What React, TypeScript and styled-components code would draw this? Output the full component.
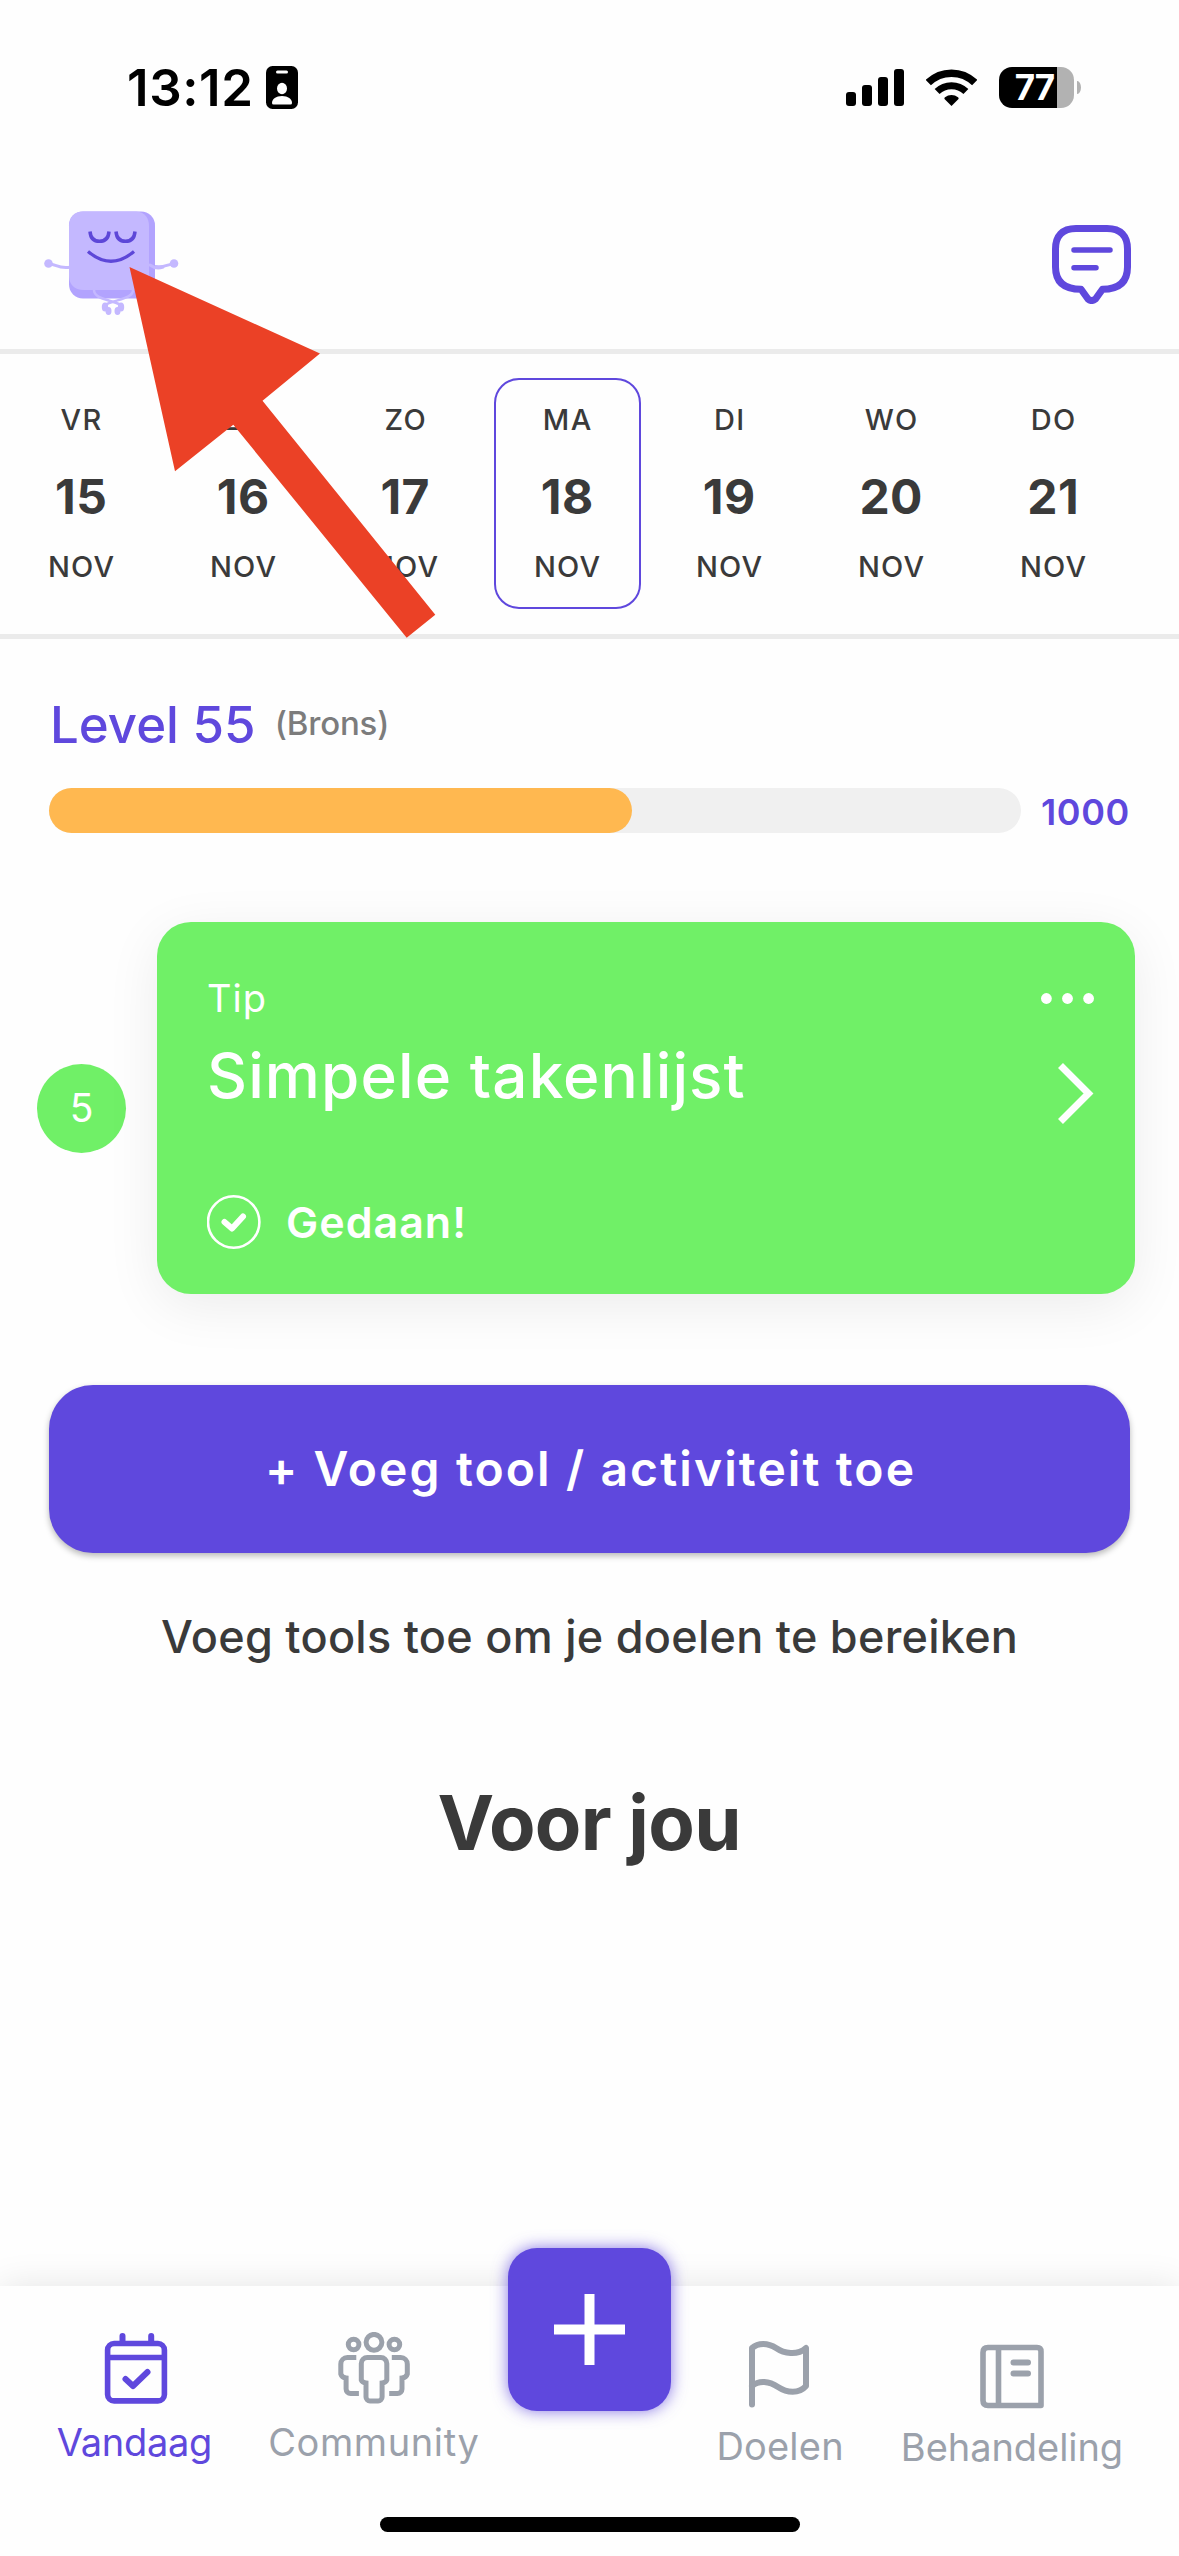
import React from "react";
import styled, { createGlobalStyle } from "styled-components";

const purple = "#5f48dd";
const green = "#70f067";
const ink = "#3a3a3a";
const muted = "#9ba1ab";
const rule = "#ebebeb";

const GlobalStyle = createGlobalStyle`
  * { box-sizing: border-box; }
  html, body { margin: 0; padding: 0; background: #fefefe; }
  body { font-family: Inter, "Liberation Sans", sans-serif; }
  button { font-family: inherit; border: 0; padding: 0; cursor: pointer; }
`;

const Screen = styled.div`
  position: relative;
  display: flex;
  flex-direction: column;
  width: 1179px;
  height: 2556px;
  background: #fefefe;
  overflow: hidden;
`;

const Label = styled.span<{ $size: number; $weight?: number; $line: number; $track?: number; $color?: string }>`
  display: block;
  white-space: nowrap;
  font-size: ${(p) => p.$size}px;
  font-weight: ${(p) => p.$weight ?? 400};
  line-height: ${(p) => p.$line}px;
  letter-spacing: ${(p) => p.$track ?? 0}px;
  margin-right: ${(p) => -(p.$track ?? 0)}px;
  color: ${(p) => p.$color ?? ink};
`;

const Icon = styled.svg`
  display: block;
  flex: none;
`;

/* ---------- status bar ---------- */

const StatusBar = styled.div`
  display: flex;
  align-items: center;
  justify-content: space-between;
  height: 175px;
  padding: 0 98px 0 127px;
`;

const StatusLeft = styled.div`
  display: flex;
  align-items: center;
  width: 171px;
  justify-content: space-between;
`;

const StatusRight = styled.div`
  display: flex;
  align-items: center;
  gap: 22px;
`;

const BatteryShell = styled.div`
  display: flex;
  align-items: center;
  gap: 3px;
`;

const Battery = styled.div<{ $level: number }>`
  display: flex;
  align-items: center;
  justify-content: center;
  width: 75px;
  height: 41px;
  padding-right: 3px;
  border-radius: 13px;
  background: linear-gradient(to right, #000 ${(p) => p.$level}%, #b2b2b2 ${(p) => p.$level}%);
`;

const BatteryNub = styled.div`
  width: 4px;
  height: 13px;
  border-radius: 0 4px 4px 0 / 0 7px 7px 0;
  background: #b2b2b2;
`;

/* ---------- header ---------- */

const Header = styled.header`
  display: flex;
  align-items: flex-start;
  justify-content: space-between;
  height: 179px;
  padding: 30px 48px 0 44px;
  border-bottom: 5px solid ${rule};
`;

const ChatButton = styled.button`
  margin-top: 20px;
  background: none;
`;

/* ---------- week strip ---------- */

const Week = styled.div`
  display: grid;
  grid-template-columns: repeat(7, 162px);
  justify-items: center;
  height: 285px;
  padding-top: 24px;
  border-bottom: 5px solid ${rule};
`;

const Day = styled.div<{ $active: boolean }>`
  display: flex;
  flex-direction: column;
  align-items: center;
  width: 147px;
  height: 231px;
  border: 2px solid ${(p) => (p.$active ? purple : "transparent")};
  border-radius: 25px;
`;

/* ---------- content ---------- */

const Main = styled.main`
  display: flex;
  flex: 1;
  flex-direction: column;
  padding-top: 60px;
`;

const LevelRow = styled.div`
  display: flex;
  align-items: flex-start;
  gap: 19px;
  height: 51px;
  padding-left: 50px;
`;

const ProgressRow = styled.div`
  display: flex;
  align-items: flex-start;
  gap: 20px;
  height: 45px;
  margin-top: 38px;
  padding-left: 49px;
`;

const Track = styled.div`
  width: 972px;
  height: 45px;
  border-radius: 23px;
  background: #f0f0f0;
`;

const Fill = styled.div<{ $percent: number }>`
  width: ${(p) => p.$percent}%;
  height: 100%;
  border-radius: 23px;
  background: #ffb850;
`;

const TaskRow = styled.div`
  display: flex;
  align-items: center;
  gap: 31px;
  margin-top: 89px;
  padding-left: 37px;
`;

const Points = styled.div`
  display: flex;
  align-items: center;
  justify-content: center;
  width: 89px;
  height: 89px;
  border-radius: 50%;
  background: ${green};
`;

const Card = styled.article`
  display: flex;
  justify-content: space-between;
  width: 978px;
  height: 372px;
  padding: 46px 41px 0 50px;
  border-radius: 34px;
  background: ${green};
  box-shadow: 0 12px 54px rgba(0, 0, 0, 0.075);
`;

const CardActions = styled.div`
  display: flex;
  flex-direction: column;
  align-items: flex-end;
  gap: 59px;
  padding-top: 25px;
`;

const DoneRow = styled.div`
  display: flex;
  align-items: center;
  gap: 25px;
  margin-top: 71px;
`;

const AddButton = styled.button`
  display: flex;
  align-items: center;
  justify-content: center;
  width: 1081px;
  height: 168px;
  margin: 91px 0 0 49px;
  border-radius: 44px;
  background: ${purple};
  box-shadow: 0 3px 6px rgba(0, 0, 0, 0.28);
`;

const Centered = styled.div<{ $top: number }>`
  display: flex;
  justify-content: center;
  margin-top: ${(p) => p.$top}px;
`;

/* ---------- bottom navigation ---------- */

const BottomNav = styled.nav`
  display: flex;
  flex-direction: column;
  align-items: center;
  height: 270px;
  background: #fefefe;
  box-shadow: 0 0 34px rgba(0, 0, 0, 0.1);
`;

const Tabs = styled.div`
  display: grid;
  grid-template-columns: 209px 269px 163px 218px 246px;
  align-self: stretch;
  height: 231px;
  padding-left: 30px;
`;

const Tab = styled.div<{ $top: number }>`
  display: flex;
  flex-direction: column;
  align-items: center;
  gap: 15px;
  padding-top: ${(p) => p.$top}px;
`;

const PlusButton = styled.button`
  display: flex;
  align-items: center;
  justify-content: center;
  width: 163px;
  height: 163px;
  margin-top: -38px;
  border-radius: 29px;
  background: ${purple};
  box-shadow: 0 0 16px rgba(95, 72, 221, 0.75);
`;

const HomeIndicator = styled.div`
  width: 420px;
  height: 15px;
  border-radius: 8px;
  background: #000;
`;

const PointerArrow = styled.svg`
  position: absolute;
  left: 129px;
  top: 266px;
`;

const days = [
  { name: "VR", date: "15" },
  { name: "ZA", date: "16" },
  { name: "ZO", date: "17" },
  { name: "MA", date: "18" },
  { name: "DI", date: "19" },
  { name: "WO", date: "20" },
  { name: "DO", date: "21" },
];

const Mascot = () => (
  <Icon width="136" height="115" viewBox="44 205 136 115" fill="none" strokeLinecap="round">
    <g stroke="#c4b8ff" strokeWidth="3">
      <path d="M49 264C57 264 57 269 70 267.300" />
      <path d="M174 264C166 264 165 269 152 266" />
    </g>
    <circle cx="48.500" cy="263.500" r="4.300" fill="#c4b8ff" />
    <circle cx="174" cy="263.500" r="4.300" fill="#c4b8ff" />
    <rect x="69" y="211.500" width="86" height="87" rx="14" fill="#b2a3fe" />
    <path d="M83 211.500H136C145 212 149 218 149 226V277C149 286 145 290 136 290H84C74 290 69 284 69 276V226C69 217 74 211.500 83 211.500Z" fill="#c4b8ff" />
    <path d="M150 265C154 268 158 269 163 267" stroke="#c4b8ff" strokeWidth="3" />
    <g stroke="#c4b8ff" strokeWidth="2.500">
      <path d="M94 290C94 298 106 299 119 304" />
      <path d="M133 290C133 298 119 299 107 304" />
    </g>
    <g fill="#c4b8ff">
      <ellipse cx="105" cy="307" rx="3.200" ry="4.600" />
      <ellipse cx="108.500" cy="311" rx="3" ry="4" />
      <ellipse cx="121" cy="307" rx="3.200" ry="4.600" />
      <ellipse cx="117.500" cy="311" rx="3" ry="4" />
    </g>
    <g stroke="#5d47d8" strokeWidth="3.500" strokeLinecap="butt">
      <path d="M90 231.500C90.500 238 94 241.300 99.500 241.300S108.500 238 109 231.500" />
      <path d="M116 231.500C116.500 238 120 241.300 125.500 241.300S134.500 238 135 231.500" />
      <path d="M88 251.500Q111 271 134 251.500" strokeWidth="3.200" />
    </g>
  </Icon>
);

const App: React.FC = () => (
  <>
    <GlobalStyle />
    <Screen>
      <StatusBar>
        <StatusLeft>
          <Label $size={51} $weight={600} $line={60} $track={0.6} $color="#000">13:12</Label>
          <Icon width="32" height="43" viewBox="0 0 32 43">
            <rect width="32" height="43" rx="6.500" fill="#000" />
            <rect x="10" y="4.500" width="12" height="3" rx="1.500" fill="#fff" />
            <ellipse cx="16" cy="22.500" rx="5" ry="5.700" fill="#fff" />
            <path d="M6 37C6 33 10 30 16 30S26 33 26 37Q26 38.500 24.500 38.500H7.500Q6 38.500 6 37Z" fill="#fff" />
          </Icon>
        </StatusLeft>
        <StatusRight>
          <Icon width="58" height="37" viewBox="0 0 58 37" fill="#000">
            <rect x="0" y="23" width="10" height="14" rx="3" />
            <rect x="16" y="16" width="10" height="21" rx="3" />
            <rect x="32" y="8" width="10" height="29" rx="3" />
            <rect x="48" y="0" width="10" height="37" rx="3" />
          </Icon>
          <Icon width="51" height="37" viewBox="0 0 51 37" fill="none" stroke="#000">
            <path d="M2.300 13.600A33.200 33.200 0 0 1 48.700 13.600" strokeWidth="7.500" />
            <path d="M11.100 22.600A20.600 20.600 0 0 1 39.900 22.600" strokeWidth="7" />
            <path d="M25.500 37L18.500 30Q18 29 19 28.200A11 11 0 0 1 32 28.200Q33 29 32.500 30Z" fill="#000" stroke="none" />
          </Icon>
          <BatteryShell>
            <Battery $level={77.3}>
              <Label $size={35} $weight={700} $line={41} $track={-1} $color="#fff">77</Label>
            </Battery>
            <BatteryNub />
          </BatteryShell>
        </StatusRight>
      </StatusBar>

      <Header>
        <Mascot />
        <ChatButton aria-label="Chat">
          <Icon width="79" height="79" viewBox="1052 225 79 79" fill="none" stroke={purple} strokeWidth="7" strokeLinejoin="round" strokeLinecap="round">
            <path d="M1081 289.300C1064 289.300 1055.500 282 1055.500 267V249C1055.500 236 1062 228.500 1076 228.500H1107C1121 228.500 1127.500 236 1127.500 249V267C1127.500 282 1119 289.300 1102.500 289.300L1095.500 299Q1091.500 302 1088 299Z" />
            <path d="M1074 250H1110M1074 267.800H1096" strokeWidth="5.500" />
          </Icon>
        </ChatButton>
      </Header>

      <Week>
        {days.map((d) => (
          <Day key={d.date} $active={d.date === "18"}>
            <Label $size={29} $weight={500} $line={80} $track={1.4}>{d.name}</Label>
            <Label $size={48} $weight={700} $line={73} $track={0.4}>{d.date}</Label>
            <Label $size={29} $weight={500} $line={68} $track={1.2}>NOV</Label>
          </Day>
        ))}
      </Week>

      <Main>
        <LevelRow>
          <Label $size={51} $weight={500} $line={51} $color={purple}>Level 55</Label>
          <Label $size={33} $weight={500} $line={48} $track={-0.2} $color="#7c7c7c">(Brons)</Label>
        </LevelRow>
        <ProgressRow>
          <Track>
            <Fill $percent={60} />
          </Track>
          <Label $size={36} $weight={600} $line={48} $track={0.6} $color={purple}>1000</Label>
        </ProgressRow>

        <TaskRow>
          <Points>
            <Label $size={39} $line={60} $color="#fff">5</Label>
          </Points>
          <Card>
            <div>
              <Label $size={38} $line={60} $track={1} $color="#fff">Tip</Label>
              <Label $size={62} $weight={500} $line={95} $track={1.1} $color="#fff">Simpele takenlijst</Label>
              <DoneRow>
                <Icon width="54" height="54" viewBox="0 0 54 54" fill="none" stroke="#fff">
                  <circle cx="26.700" cy="27" r="25.700" strokeWidth="2.600" />
                  <path d="M17.500 27L25 33.500L36 21.500" strokeWidth="6" strokeLinecap="round" strokeLinejoin="round" />
                </Icon>
                <Label $size={43} $weight={600} $line={56} $track={1} $color="#fff">Gedaan!</Label>
              </DoneRow>
            </div>
            <CardActions>
              <Icon width="53" height="11" viewBox="0 0 53 11" fill="#fff">
                <circle cx="5.400" cy="5.500" r="5.400" />
                <circle cx="26.500" cy="5.500" r="5.400" />
                <circle cx="47.600" cy="5.500" r="5.400" />
              </Icon>
              <Icon width="36" height="61" viewBox="0 0 36 61" fill="none" stroke="#fff" strokeWidth="7">
                <path d="M2.500 2.500L30.500 30.500L2.500 58.500" />
              </Icon>
            </CardActions>
          </Card>
        </TaskRow>

        <AddButton>
          <Label $size={48} $weight={600} $line={60} $track={2.1} $color="#fff">+ Voeg tool / activiteit toe</Label>
        </AddButton>
        <Centered $top={53}>
          <Label $size={45} $weight={500} $line={61} $track={0.26}>Voeg tools toe om je doelen te bereiken</Label>
        </Centered>
        <Centered $top={105}>
          <Label $size={76} $weight={700} $line={100} $track={-0.7}>Voor jou</Label>
        </Centered>
      </Main>

      <BottomNav>
        <Tabs>
          <Tab $top={46}>
            <Icon width="72" height="72" viewBox="98.500 2332 72 72" fill="none" stroke={purple} strokeWidth="5.600" strokeLinecap="round" strokeLinejoin="round">
              <rect x="107.100" y="2343.500" width="56.800" height="57.400" rx="6.500" />
              <path d="M107 2357.500H164" strokeLinecap="butt" />
              <path d="M122 2336V2343M150.700 2336V2343" strokeWidth="6" />
              <path d="M125 2379L132.500 2386L147 2372" strokeWidth="6" />
            </Icon>
            <Label $size={38} $line={46} $track={-0.3} $color={purple}>Vandaag</Label>
          </Tab>
          <Tab $top={46}>
            <Icon width="72" height="72" viewBox="337.700 2332 72 72" fill="none" stroke={muted} strokeWidth="5">
              <circle cx="373.700" cy="2342.300" r="7.900" />
              <circle cx="353.300" cy="2344.500" r="5.300" />
              <circle cx="394.100" cy="2344.500" r="5.300" />
              <path d="M367 2357.500H380.500A6 6 0 0 1 386.500 2363.500V2380Q385.500 2382.500 381.800 2383V2397A4 4 0 0 1 377.800 2401H369.700A4 4 0 0 1 365.700 2397V2383Q362 2382.500 361 2380V2363.500A6 6 0 0 1 367 2357.500Z" />
              <path d="M356 2357.500H347A6.500 6.500 0 0 0 340.500 2364V2374Q341.500 2377.500 345.800 2378V2389A4.500 4.500 0 0 0 350.300 2393.500H358.600" />
              <path d="M391.500 2357.500H400.500A6.500 6.500 0 0 1 407 2364V2374Q406 2377.500 401.700 2378V2389A4.500 4.500 0 0 1 397.200 2393.500H388.900" />
            </Icon>
            <Label $size={38} $line={46} $track={0.6} $color={muted}>Community</Label>
          </Tab>
          <PlusButton aria-label="Toevoegen">
            <Icon width="71" height="71" viewBox="0 0 71 71" stroke="#fff" strokeWidth="10">
              <path d="M0 35.500H71M35.500 0V71" />
            </Icon>
          </PlusButton>
          <Tab $top={50}>
            <Icon width="72" height="72" viewBox="744 2336 72 72" fill="none" stroke={muted} strokeWidth="6" strokeLinecap="round" strokeLinejoin="round">
              <path d="M752 2404.500V2348C758 2342.500 768 2342.500 776 2348S797 2356 806 2348V2386C799 2394 787 2393 778 2387S759 2380 752 2386" />
            </Icon>
            <Label $size={38} $line={46} $track={0.2} $color={muted}>Doelen</Label>
          </Tab>
          <Tab $top={51}>
            <Icon width="72" height="72" viewBox="976 2337 72 72" fill="none" stroke={muted} strokeWidth="5.600" strokeLinejoin="round">
              <path d="M988 2347.500H1037Q1041 2347.500 1041 2351.500V2405.500H988Q983 2405.500 983 2400.500V2352.500Q983 2347.500 988 2347.500ZM998.500 2347.500V2405.500" />
              <path d="M1013.500 2362.500H1028M1013.500 2373.500H1028" strokeWidth="6" strokeLinecap="round" />
            </Icon>
            <Label $size={38} $line={46} $track={-0.05} $color={muted}>Behandeling</Label>
          </Tab>
        </Tabs>
        <HomeIndicator />
      </BottomNav>

      <PointerArrow width="308" height="373" viewBox="129 266 308 373">
        <path d="M129.500 267L320 353.500L262.500 400.700L435.300 614.700L406.700 637.700L233.300 424.700L175 471.300Z" fill="#eb4126" />
      </PointerArrow>
    </Screen>
  </>
);

export default App;
